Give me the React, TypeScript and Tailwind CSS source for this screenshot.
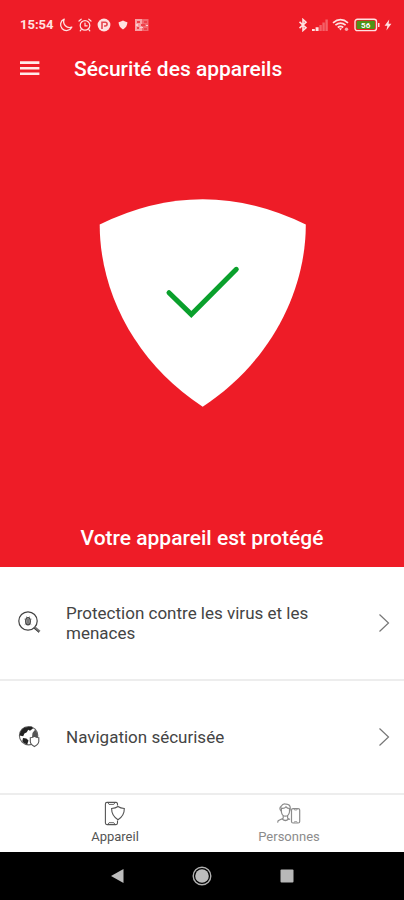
import type { ReactNode } from 'react';

function StatusBar() {
  return (
    <div className="flex items-center justify-between pt-4 pr-3 pl-5 text-[#ffe1e1]">
      <div className="flex h-[18px] items-center gap-[5px]">
        <span className="text-[13px] leading-[18px] font-bold">15:54</span>
        <svg width="14" height="14" viewBox="0 0 14 14" fill="none" stroke="currentColor" strokeWidth="1.3" strokeLinejoin="round">
          <path d="M5.2 1.2A5.9 5.9 0 1 0 12.8 9.2A6 6 0 0 1 5.2 1.2Z" />
        </svg>
        <svg width="14" height="14" viewBox="0 0 14 14" fill="none" stroke="currentColor" strokeWidth="1.2" strokeLinecap="round">
          <circle cx="7" cy="7.4" r="4.8" />
          <path d="M1 3L3.2 1.2M13 3L10.8 1.2M7 5V7.8H9.2M3.2 11.6L2.2 12.8M10.8 11.6L11.8 12.8" />
        </svg>
        <svg width="14" height="14" viewBox="0 0 14 14">
          <circle cx="7" cy="7" r="6.4" fill="currentColor" />
          <path d="M5 11V4.2H8.2A1.9 1.9 0 0 1 8.2 8H7" fill="none" stroke="#e44750" strokeWidth="1.6" />
        </svg>
        <svg width="14" height="14" viewBox="0 0 14 14" fill="currentColor">
          <path d="M2.6 4.2Q5 4 7 2.6Q9 4 11.4 4.2Q11.4 8.9 7 11.4Q2.6 8.9 2.6 4.2Z" />
        </svg>
        <svg width="14" height="14" viewBox="0 0 14 14">
          <path d="M0 1H7V13H0Z" fill="#f9a0a4" />
          <path d="M7 1H13.5V13H7Z" fill="#f2666d" />
          <path d="M2 3H5V5H2ZM9 3H12V5H9ZM2 9H4V11H2ZM6 6H10V8H6ZM9 10H12V12H9Z" fill="#ee3f48" />
          <path d="M1 6H3V8H1ZM5 9H8V10H5ZM11 7H13V8H11Z" fill="#fbd0d2" />
        </svg>
      </div>
      <div className="flex h-[18px] items-center gap-1">
        <svg width="10" height="14" viewBox="0 0 10 14" fill="none" stroke="currentColor" strokeWidth="1.6">
          <path d="M1.5 3.8L8 9.8L5 12.5V1.5L8 4.2L1.5 10.2" />
        </svg>
        <svg width="16" height="14" viewBox="0 0 16 14" fill="currentColor">
          <path d="M0 11H2.8V13H0ZM3.6 9.2H6.6V13H3.6Z" />
          <path d="M7.4 7H9.8V13H7.4ZM10.4 4.4H12.8V13H10.4ZM13.4 1.5H15.8V13H13.4Z" opacity=".35" />
        </svg>
        <svg width="18" height="14" viewBox="0 0 18 14" fill="none" stroke="currentColor" strokeWidth="1.7">
          <path d="M1 4.8Q8.5 -1.4 16 4.8M3.4 7.2Q8.5 3 13.6 7.2M5.8 9.5Q8.5 7.2 11.2 9.5" />
          <path d="M7 10.3H10L8.5 12.5Z" fill="currentColor" stroke="none" />
          <circle cx="14.5" cy="11.3" r="1.7" fill="currentColor" stroke="none" opacity=".7" />
        </svg>
        <svg width="26" height="14" viewBox="0 0 26 14">
          <rect x="1" y="1.2" width="21.5" height="11.4" rx="2.4" fill="none" stroke="currentColor" strokeWidth="1.4" />
          <rect x="2.6" y="2.8" width="18.3" height="8.2" rx="1" fill="#4f9418" />
          <path d="M24 5H25.5V9H24Z" fill="currentColor" />
          <text x="11.7" y="10" fill="#ffffff" fontSize="8" fontWeight="700" textAnchor="middle">56</text>
        </svg>
        <svg width="8" height="14" viewBox="0 0 8 14" fill="currentColor">
          <path d="M5.2 1.5L.6 7.7H3.4L2.4 12.5L7.4 5.8H4.6Z" />
        </svg>
      </div>
    </div>
  );
}

function VirusScanIcon() {
  return (
    <svg width="24" height="24" viewBox="0 0 24 24" fill="none" stroke="#444444">
      <circle cx="10" cy="10" r="9.2" strokeWidth="1.2" />
      <path d="M16.5 16.5L21.6 20.8" stroke="#777777" strokeWidth="2.8" />
      <path d="M15.8 17L21 21.4" stroke="#333333" strokeWidth=".8" />
      <ellipse cx="10" cy="10.3" rx="2.3" ry="3.6" fill="#bbbbbb" strokeWidth="1.3" />
      <path d="M8.4 5.4L9.3 7M11.6 5.4L10.7 7M6.3 8L7.8 9M13.7 8L12.2 9M6.6 13.6L8 12.5M13.4 13.6L12 12.5" strokeWidth=".5" />
      <path d="M10 8V12.8" stroke="#222222" strokeWidth=".8" />
    </svg>
  );
}

function SafeBrowsingIcon() {
  return (
    <svg width="24" height="24" viewBox="0 0 24 24" fill="none">
      <circle cx="10.6" cy="10.7" r="9.2" stroke="#666666" strokeWidth="1.1" />
      <path d="M6.5 2.5L13.5 1.5L15 3.4L12 5.8L10.2 4.8L8.8 7.2L6.4 8.4L5.2 11.3L1.6 10.4Q2 5.2 6.5 2.5Z" fill="#222222" />
      <path d="M5 13L8.4 13.4L10.5 15.5L9.2 19.5Q5 18 4.3 16.2Z" fill="#222222" />
      <path d="M14.5 8L17.2 4.6Q20 8 19.8 12.5H14Z" fill="#555555" />
      <path d="M16.4 11.4Q18.2 12.6 20.8 12.8V16.5Q20.5 19.3 16.4 21.5Q12.4 19.3 12.3 16.5V12.8Q14.8 12.6 16.4 11.4Z" fill="#ffffff" stroke="#555555" strokeWidth="1.1" />
    </svg>
  );
}

function FeatureRow({ icon, label }: { icon: ReactNode; label: string }) {
  return (
    <button type="button" className="flex h-[114px] w-full items-center border-b-2 border-[#ededed] pr-[14px] pl-[18px] text-left">
      {icon}
      <span className="ml-6 max-w-[270px] flex-1 text-[17px] leading-5 text-[#444444]">{label}</span>
      <svg className="ml-auto" width="12" height="20" viewBox="0 0 12 20" fill="none" stroke="#777777" strokeWidth="1.2">
        <path d="M1.5 1.5L10.5 10L1.5 18.5" />
      </svg>
    </button>
  );
}

function DeviceIcon() {
  return (
    <svg width="24" height="26" viewBox="0 0 24 26" fill="none" stroke="currentColor" strokeWidth="1.1">
      <path d="M14.5 4.5V3Q14.5 1.4 13 1.4H4Q2.4 1.4 2.4 3V22Q2.4 23.6 4 23.6H13Q14.5 23.6 14.5 22V19.5" />
      <path d="M5 1.8L6 3.4H10.8L11.8 1.8M5 23.2L6 21.7H10.8L11.8 23.2" strokeWidth=".9" />
      <path d="M8.6 7.5Q12.5 7.4 15 5.5Q17.5 7.4 21.3 7.5Q21.5 14.5 15 18.8Q8.5 14.5 8.6 7.5Z" fill="#ffffff" />
    </svg>
  );
}

function PeopleIcon() {
  return (
    <svg width="24" height="26" viewBox="0 0 24 26" fill="none" stroke="currentColor" strokeWidth="1.2">
      <path d="M4.2 10Q1.6 7.5 4.2 5.2Q6 2 9.3 3.2Q13.4 3.6 13.2 7Q13.6 8.7 12.7 10" />
      <path d="M4.4 7.2Q7.3 7.9 9 5.8Q10.3 7.4 12.5 7.5V11Q11.7 15.2 8.4 15.2Q5 15.2 4.4 11Z" />
      <path d="M6.2 14.8V17.2L1.2 19.6L.6 21.7M10.6 14.8V17.2L13 18.6M5.2 18Q8.4 21 11.6 18" />
      <rect x="14.5" y="7.6" width="8.2" height="14.4" rx="1.5" />
      <path d="M17 7.8L17.5 9H19.8L20.3 7.8M17 21.8L17.5 20.6H19.8L20.3 21.8" strokeWidth=".8" />
    </svg>
  );
}

export default function App() {
  return (
    <div className="flex min-h-screen flex-col bg-white font-[Roboto,sans-serif]">
      <section className="flex flex-1 flex-col bg-[#ee1c27] text-white">
        <StatusBar />
        <header className="flex h-[70px] items-center pl-5">
          <button type="button" aria-label="Menu">
            <svg width="20" height="16" viewBox="0 0 20 16" stroke="#ffe9e9" strokeWidth="2.6">
              <path d="M0 1.6H19.4M0 7.2H19.4M0 12.8H19.4" />
            </svg>
          </button>
          <h1 className="ml-[34px] text-[21px] leading-6 font-medium">Sécurité des appareils</h1>
        </header>
        <main className="flex flex-1 flex-col items-center pt-[95px]">
          <svg width="210" height="208" viewBox="-2 0 210 208">
            <path d="M.7 25.5Q103.7 -25 206.8 25.5C206.8 95 169 165 103.7 207.7C38 165 .7 95 .7 25.5Z" fill="#ffffff" />
            <path d="M70 93.7L92.3 115.4L137.3 70.3" fill="none" stroke="#0aa02c" strokeWidth="5" strokeLinecap="round" />
          </svg>
          <p className="mt-auto mb-[17px] text-[21px] leading-6 font-medium">Votre appareil est protégé</p>
        </main>
      </section>

      <section>
        <FeatureRow icon={<VirusScanIcon />} label="Protection contre les virus et les menaces" />
        <FeatureRow icon={<SafeBrowsingIcon />} label="Navigation sécurisée" />
      </section>

      <nav className="flex h-[57px] px-7 text-[13px] leading-4">
        <button type="button" className="flex flex-1 flex-col items-center gap-[2px] pt-[6px] text-[#555555]">
          <DeviceIcon />
          <span>Appareil</span>
        </button>
        <button type="button" className="flex flex-1 flex-col items-center gap-[2px] pt-[6px] text-[#8c8c8c]">
          <PeopleIcon />
          <span>Personnes</span>
        </button>
      </nav>

      <div className="grid h-12 grid-cols-3 bg-black px-[75px]">
        <button type="button" aria-label="Retour" className="flex items-center justify-center">
          <svg width="14" height="16" viewBox="0 0 14 16" fill="#bdbdbd">
            <path d="M13.5 1V15L1 8Z" />
          </svg>
        </button>
        <button type="button" aria-label="Accueil" className="flex items-center justify-center">
          <svg width="20" height="20" viewBox="0 0 20 20">
            <circle cx="10" cy="10" r="8.8" fill="none" stroke="#b0b0b0" strokeWidth="1.4" />
            <circle cx="10" cy="10" r="6.8" fill="#bdbdbd" />
          </svg>
        </button>
        <button type="button" aria-label="Applications récentes" className="flex items-center justify-center">
          <svg width="14" height="14" viewBox="0 0 14 14">
            <rect x=".5" y=".5" width="13" height="13" rx="1" fill="#b8b8b8" />
          </svg>
        </button>
      </div>
    </div>
  );
}
